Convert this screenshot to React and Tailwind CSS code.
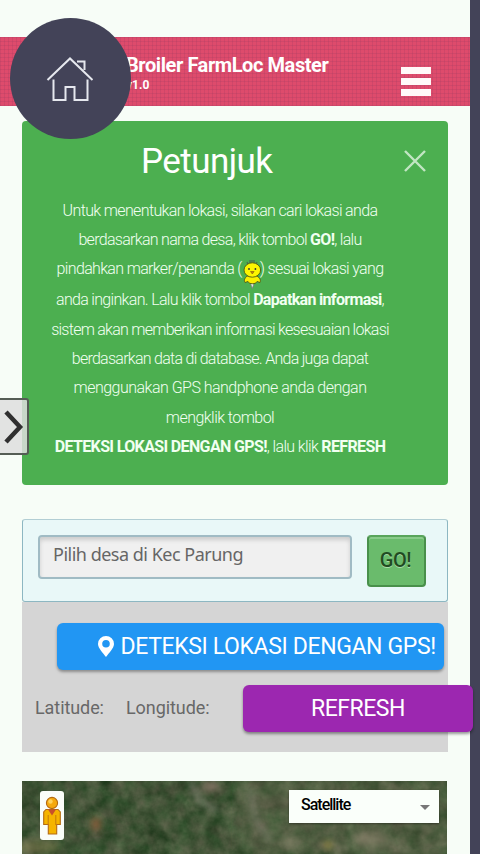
import React from "react";

function Chick() {
  return (
    <svg className="-mr-[6px] -ml-[4px] mt-[13px] h-[30px] w-[22px] shrink-0" viewBox="0 0 22 30">
      <path d="M7 4L6 2M9 3V0M11 3V0M13 3V0M15 4l1-2" stroke="#4f6b50" strokeWidth="1.3" />
      <path d="M9.500 23.500h3.500l-1.700 5z" fill="#eef4ee" stroke="#777" strokeWidth="0.700" />
      <path d="M6 16c-2 2-3.500 4-2 6.500l3-1c1 3 8 3 9 0l3 1c1-2.500 0-4.500-3-6.500z" fill="#fbf000" stroke="#4e5a14" strokeWidth="0.900" />
      <ellipse cx="11.300" cy="10" rx="8.300" ry="7.200" fill="#fdf500" stroke="#4e5a14" strokeWidth="0.900" />
      <circle cx="8" cy="9" r="0.900" fill="#333" />
      <circle cx="14.400" cy="9" r="0.900" fill="#333" />
      <path d="M9.500 11.500h3.600l-1.800 2.500z" fill="#c9800c" stroke="#7a5a10" strokeWidth="0.600" />
    </svg>
  );
}

function Pegman() {
  return (
    <svg className="h-[40px] w-[18px]" viewBox="0 0 18 40">
      <path d="M3 13.500h12l2.300 2.500v12.500h-3.600V38H5.300v-9.500H.7V16z" fill="#f5b400" stroke="#b46a12" strokeWidth="1.100" />
      <path d="M5.200 19v10M12.800 19v10" stroke="#c47b0c" strokeWidth="1" />
      <path d="M5 13.500h8l-4 6z" fill="#c7502a" />
      <circle cx="9" cy="7" r="5.600" fill="#f5a90e" stroke="#b46a12" strokeWidth="1.100" />
      <circle cx="7.500" cy="5.500" r="2.200" fill="#ffd35c" />
    </svg>
  );
}

function Terrain() {
  return (
    <svg className="absolute inset-0 h-full w-full" viewBox="0 0 425 73" preserveAspectRatio="none">
      <defs>
        <filter id="grass" x="0" y="0" width="100%" height="100%" colorInterpolationFilters="sRGB">
          <feTurbulence type="fractalNoise" baseFrequency="0.065" numOctaves="4" seed="21" />
          <feColorMatrix values="0.28 0.2 0 0 0.010  0.14 0.22 0 0 0.145  0.2 0.18 0 0 0.020  0 0 0 0 1" />
        </filter>
        <filter id="soft" x="-50%" y="-50%" width="200%" height="200%"><feGaussianBlur stdDeviation="3" /></filter>
      </defs>
      <rect width="425" height="73" filter="url(#grass)" />
      <g filter="url(#soft)">
        <path d="M168 0l10 20 18 10M228 10l6 30 14 20" stroke="#8f9284" strokeWidth="5" fill="none" opacity="0.550" />
        <ellipse cx="74" cy="43" rx="5" ry="7" fill="#94603e" opacity="0.800" />
        <ellipse cx="16" cy="66" rx="22" ry="7" fill="#8a8353" opacity="0.500" />
        <ellipse cx="188" cy="6" rx="9" ry="6" fill="#94806f" opacity="0.600" />
        <ellipse cx="270" cy="62" rx="14" ry="5" fill="#999077" opacity="0.400" />
        <ellipse cx="350" cy="58" rx="20" ry="9" fill="#a0937e" opacity="0.450" />
        <ellipse cx="306" cy="64" rx="5" ry="4" fill="#9a8a35" opacity="0.800" />
        <rect x="215" width="210" height="73" fill="#877e68" opacity="0.250" />
      </g>
    </svg>
  );
}

export default function App() {
  return (
    <div className="relative h-[854px] w-[480px] overflow-hidden bg-[#434358] font-['Roboto',sans-serif]">
      <main className="flex h-full w-[470px] flex-col bg-[#f7fdf7] pt-[37px]">
        <header className="flex h-[69px] shrink-0 justify-between bg-[#de4b6c] bg-[repeating-linear-gradient(0deg,rgba(120,50,90,.14)_0_1px,transparent_1px_4px),repeating-linear-gradient(90deg,rgba(120,50,90,.14)_0_1px,transparent_1px_4px)] pr-[39px] pl-[126px] text-white">
          <div className="pt-[16px] font-bold whitespace-nowrap">
            <h1 className="text-[20px] leading-[24px] tracking-[-0.42px]">Broiler FarmLoc Master</h1>
            <p className="text-[12px] leading-[16px]">v1.0</p>
          </div>
          <div className="flex flex-col gap-[4px] pt-[30px]">
            <span className="h-[7px] w-[30px] bg-[#fff8f8]" />
            <span className="h-[7px] w-[30px] bg-[#fff8f8]" />
            <span className="h-[7px] w-[30px] bg-[#fff8f8]" />
          </div>
        </header>

        <section className="mt-[15px] ml-[22px] flex h-[364px] w-[426px] shrink-0 flex-col rounded-[4px] bg-[#4caf50] text-[#f1fff1]">
          <div className="flex h-[75px] shrink-0 justify-between pr-[21px] pl-[119px]">
            <h2 className="pt-[19px] text-[35px] leading-[44px] tracking-[-0.55px] text-white">Petunjuk</h2>
            <svg className="mt-[28px] h-[24px] w-[24px]" viewBox="0 0 24 24" stroke="#c2e6c3" strokeWidth="2.400">
              <path d="M2 2l20 20M22 2L2 22" />
            </svg>
          </div>
          <div className="flex w-[396px] flex-col items-center text-[16px] leading-[29.300px] font-light whitespace-nowrap [&_b]:font-bold">
            <p className="tracking-[-0.64px]">Untuk menentukan lokasi, silakan cari lokasi anda</p>
            <p className="tracking-[-0.7px]">berdasarkan nama desa, klik tombol <b>GO!</b>, lalu</p>
            <p className="-mt-[1px] flex h-[31px] tracking-[-0.66px]">pindahkan marker/penanda (<span className="flex h-[29px] items-center px-[3px]"><Chick /></span>)&nbsp;sesuai lokasi yang</p>
            <p className="tracking-[-0.68px]">anda inginkan. Lalu klik tombol <b>Dapatkan informasi</b>,</p>
            <p className="mt-[1px] tracking-[-0.74px]">sistem akan memberikan informasi kesesuaian lokasi</p>
            <p className="tracking-[-0.73px]">berdasarkan data di database. Anda juga dapat</p>
            <p className="tracking-[-0.52px]">menggunakan GPS handphone anda dengan</p>
            <p className="tracking-[-0.55px]">mengklik tombol</p>
            <p className="tracking-[-0.64px]"><b>DETEKSI LOKASI DENGAN GPS!</b>, lalu klik <b>REFRESH</b></p>
          </div>
        </section>

        <section className="mt-[34px] ml-[22px] flex h-[83px] w-[426px] shrink-0 gap-[15px] rounded-[3px] border border-[#8db7c2] border-t-[#b2ced4] bg-[#e9f8f8] pt-[15px] pl-[15px]">
          <div className="h-[44px] w-[314px] rounded-[4px] border-2 border-[#a0bbc4] bg-[#f0f0f0] pl-[13px] font-['Noto_Sans',sans-serif] text-[18px] leading-[35px] tracking-[-0.5px] whitespace-nowrap text-[#666] shadow-[inset_0_3px_4px_#ccc]">
            Pilih desa di Kec Parung
          </div>
          <button className="h-[52px] w-[59px] rounded-[4px] border-2 border-[#49904b] border-t-[#59a55b] bg-[#6abb6c] pr-[2px] pb-[2px] text-[20px] font-medium tracking-[-0.4px] text-[#214a22] shadow-[inset_0_2px_0_#89cb8a] [text-shadow:0_1px_0_#a9dda9]">
            GO!
          </button>
        </section>

        <section className="ml-[22px] flex h-[150px] w-[426px] shrink-0 flex-col bg-[#d5d5d5] pt-[21px]">
          <button className="ml-[35px] flex h-[47px] w-[387px] shrink-0 items-center rounded-[6px] bg-[#2196f3] pt-[1px] pl-[41px] text-[23px] tracking-[-0.37px] whitespace-nowrap text-white shadow-[0_2px_3px_rgba(0,0,0,.35)]">
            <svg className="-mt-[1px] mr-[6.500px] h-[21px] w-[16px] shrink-0" viewBox="0 0 16 21">
              <path fill="white" fillRule="evenodd" d="M8 0a8 8 0 0 0-8 8c0 4 5 9 8 13 3-4 8-9 8-13a8 8 0 0 0-8-8zm0 4a3.800 3.800 0 1 1 0 7.600A3.800 3.800 0 0 1 8 4z" />
            </svg>
            DETEKSI LOKASI DENGAN GPS!
          </button>
          <div className="mt-[15px] flex h-[47px] items-center pl-[13px] text-[18px] tracking-[-0.08px] whitespace-nowrap text-[#686868]">
            <span className="-mt-[3px] w-[91px] shrink-0">Latitude:</span>
            <span className="-mt-[3px] w-[117px] shrink-0">Longitude:</span>
            <button className="h-[47px] w-[230px] shrink-0 rounded-[6px] bg-[#9c27b0] pt-[2px] text-[23px] tracking-[-0.5px] text-white shadow-[0_2px_3px_rgba(0,0,0,.4)]">REFRESH</button>
          </div>
        </section>

        <section className="relative mt-[29px] ml-[22px] h-[73px] w-[425px] shrink-0 overflow-hidden bg-[#3c5038]">
          <Terrain />
          <div className="relative flex justify-between pt-[9px] pr-[8px] pl-[18px]">
            <div className="mt-[1px] flex h-[49px] w-[24px] items-center justify-center rounded-[3px] bg-[#fafdf9]">
              <Pegman />
            </div>
            <div className="flex h-[33px] w-[150px] items-center justify-between bg-[#fafffa] pr-[9px] pb-[3px] pl-[12px] text-[16px] font-medium tracking-[-1px] text-black shadow-[0_1px_2px_rgba(0,0,0,.4)]">
              Satellite
              <span className="mt-[4px] border-x-[5px] border-t-[5px] border-x-transparent border-t-[#777]" />
            </div>
          </div>
        </section>
      </main>

      <div className="absolute top-[18px] left-[10px] flex h-[121px] w-[121px] items-center justify-center rounded-full bg-[#434358]">
        <svg className="-ml-[2px] h-[46px] w-[48px]" viewBox="0 0 48 46" fill="none" stroke="#e6e8ee" strokeWidth="2">
          <path d="M1.500 24L24 2.500 46.500 24M31 5.500h7.500V14M7.500 23.500V44h12V31h9v13h13V23.500" />
        </svg>
      </div>
      <div className="absolute top-[398px] -left-[2px] flex h-[57px] w-[31px] items-center rounded-r-[3px] border-2 border-[#555d55] bg-[#dedede]/85">
        <svg className="ml-[4px] h-[34px] w-[20px]" viewBox="0 0 20 34" fill="none" stroke="#303030" strokeWidth="4.500">
          <path d="M2 2l14 15L2 32" />
        </svg>
      </div>
    </div>
  );
}
